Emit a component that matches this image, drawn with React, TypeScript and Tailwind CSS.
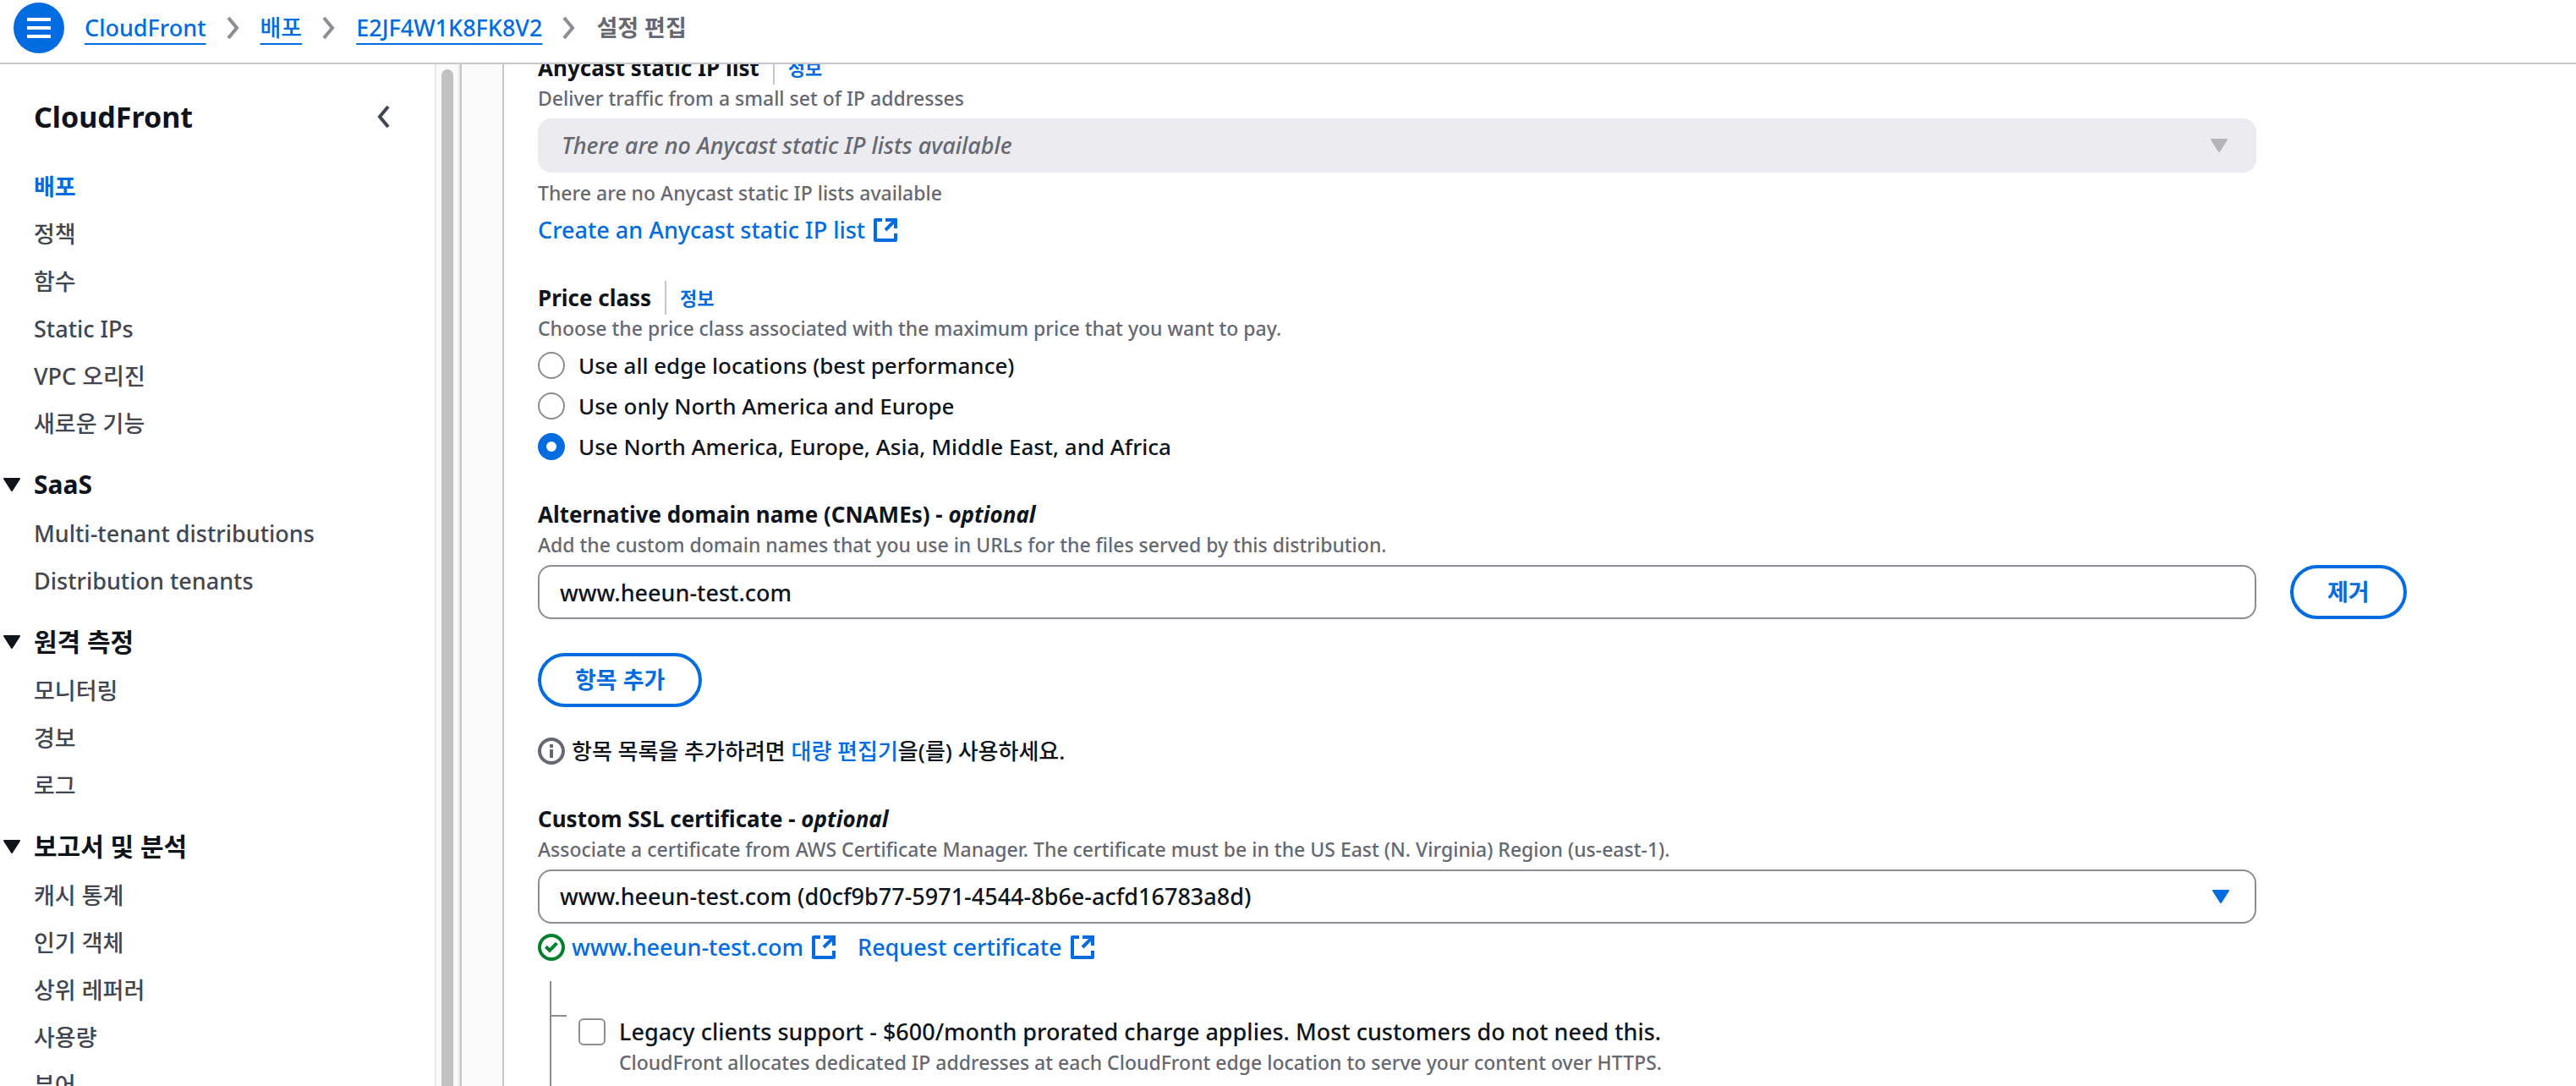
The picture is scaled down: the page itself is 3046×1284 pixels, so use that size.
import React, { useState } from 'react';

interface NavSection {
  title: string;
  items: string[];
}

const mainItems = ['배포', '정책', '함수', 'Static IPs', 'VPC 오리진', '새로운 기능'];

const sections: NavSection[] = [
  { title: 'SaaS', items: ['Multi-tenant distributions', 'Distribution tenants'] },
  { title: '원격 측정', items: ['모니터링', '경보', '로그'] },
  { title: '보고서 및 분석', items: ['캐시 통계', '인기 객체', '상위 레퍼러', '사용량', '뷰어'] },
];

const priceClasses = [
  { value: 'all', label: 'Use all edge locations (best performance)' },
  { value: '100', label: 'Use only North America and Europe' },
  { value: '200', label: 'Use North America, Europe, Asia, Middle East, and Africa' },
];

function Chevron({ className, left = false }: { className?: string; left?: boolean }) {
  return (
    <svg viewBox="0 0 16 28" className={className} fill="none" stroke="currentColor" strokeWidth="4">
      <path d={left ? 'M14 2L4 14L14 26' : 'M2 2L12 14L2 26'} />
    </svg>
  );
}

function Caret({ className }: { className?: string }) {
  return (
    <svg viewBox="0 0 20 16" className={className} fill="currentColor" stroke="currentColor" strokeWidth="2" strokeLinejoin="round">
      <path d="M1 1H19L10 15Z" />
    </svg>
  );
}

function ExternalIcon() {
  return (
    <svg viewBox="0 0 16 16" className="size-8 shrink-0" fill="none" stroke="currentColor" strokeWidth="2">
      <path d="M6 2H2V14H14V10" strokeLinejoin="round" />
      <path d="M8 2H14V7M14 2L8 8" />
    </svg>
  );
}

function InfoLink() {
  return (
    <a href="#info" className="ml-4 border-l-2 border-[#c6c6cd] pl-4 text-[22px] font-bold text-[#006ce0]">
      정보
    </a>
  );
}

function Hint({ children }: { children: React.ReactNode }) {
  return <p className="text-[23px] leading-8 text-[#656871]">{children}</p>;
}

function Sidebar() {
  return (
    <aside className="flex w-[546px] shrink-0 border-r-2 border-[#c6c6cd]">
      <nav className="flex-1 pt-10">
        <div className="flex h-11 items-center justify-between pr-[53px] pl-10">
          <h2 className="text-[34px] font-bold text-[#0f141a]">CloudFront</h2>
          <button type="button" aria-label="닫기">
            <Chevron left className="h-7 w-4 text-[#424650]" />
          </button>
        </div>
        <ul className="mt-[41px] flex flex-col gap-4 pl-10">
          {mainItems.map((item, i) => (
            <li key={item}>
              <a href="#nav" className={i === 0 ? 'font-bold text-[#006ce0]' : 'text-[#424650]'}>
                {item}
              </a>
            </li>
          ))}
        </ul>
        {sections.map((section) => (
          <section key={section.title} className="mt-[30px]">
            <button type="button" className="flex h-11 items-center gap-4 pl-1 text-[30px] font-bold">
              <Caret className="h-4 w-5" />
              {section.title}
            </button>
            <ul className="mt-4 flex flex-col gap-4 pl-10">
              {section.items.map((item) => (
                <li key={item}>
                  <a href="#nav" className="text-[#424650]">{item}</a>
                </li>
              ))}
            </ul>
          </section>
        ))}
      </nav>
      {/* scroll track */}
      <div className="w-[30px] border-x-2 border-[#e8e8e8] bg-[#fafafa] px-[6px] pt-[6px]">
        <div className="h-full rounded-t-full bg-[#c1c1c1]" />
      </div>
    </aside>
  );
}

export default function App() {
  const [priceClass, setPriceClass] = useState('200');
  const [domain, setDomain] = useState('www.heeun-test.com');
  const [legacy, setLegacy] = useState(false);

  return (
    <div className="flex h-screen flex-col overflow-hidden bg-white font-['Noto_Sans','Noto_Sans_CJK_KR',sans-serif] text-[27px] leading-10 font-medium text-[#0f141a]">
      <header className="flex h-[76px] shrink-0 items-start border-b-2 border-[#c6c6cd] px-4 pt-[3px]">
        <button type="button" aria-label="메뉴" className="flex size-[60px] flex-col items-center justify-center gap-[6px] rounded-full bg-[#006ce0]">
          <span className="h-1 w-7 bg-white" />
          <span className="h-1 w-7 bg-white" />
          <span className="h-1 w-7 bg-white" />
        </button>
        <nav className="ml-6 flex h-[60px] items-center gap-6">
          {['CloudFront', '배포', 'E2JF4W1K8FK8V2'].map((crumb) => (
            <React.Fragment key={crumb}>
              <a href="#crumb" className="text-[#006ce0] underline decoration-2 underline-offset-8">
                {crumb}
              </a>
              <Chevron className="h-7 w-4 text-[#8c8c94]" />
            </React.Fragment>
          ))}
          <span className="font-bold text-[#656871]">설정 편집</span>
        </nav>
      </header>

      <div className="flex min-h-0 flex-1 overflow-hidden">
        <Sidebar />
        <main className="flex-1 bg-[#fbfbfb] pl-12">
          <div className="h-full overflow-hidden border-l-2 border-[#c6c6cd] bg-white">
            <form className="-mt-4 flex flex-col gap-10 px-10">
              <div className="grid grid-cols-[minmax(0,1fr)_298px] gap-x-10">
                <div>
                  <div className="flex">
                    <label htmlFor="anycast" className="text-[26px] font-bold">Anycast static IP list</label>
                    <InfoLink />
                  </div>
                  <Hint>Deliver traffic from a small set of IP addresses</Hint>
                  <div className="relative my-2">
                    <select id="anycast" disabled className="h-16 w-full appearance-none rounded-2xl bg-[#ebebf0] px-7 text-[#656871] italic opacity-100">
                      <option>There are no Anycast static IP lists available</option>
                    </select>
                    <Caret className="pointer-events-none absolute top-6 right-[34px] h-4 w-5 text-[#b4b4bb]" />
                  </div>
                  <Hint>There are no Anycast static IP lists available</Hint>
                  <a href="#create" className="mt-2 flex items-center gap-2 text-[#006ce0]">
                    Create an Anycast static IP list
                    <ExternalIcon />
                  </a>
                </div>
              </div>

              <fieldset>
                <div className="flex">
                  <legend className="text-[26px] font-bold">Price class</legend>
                  <InfoLink />
                </div>
                <Hint>Choose the price class associated with the maximum price that you want to pay.</Hint>
                <div className="mt-2 flex flex-col items-start gap-2 text-[26px]">
                  {priceClasses.map((option) => (
                    <label key={option.value} className="flex items-center gap-4">
                      <input
                        type="radio"
                        name="price-class"
                        checked={priceClass === option.value}
                        onChange={() => setPriceClass(option.value)}
                        className="size-8 appearance-none rounded-full border-2 border-[#8c8c94] bg-white checked:border-10 checked:border-[#006ce0]"
                      />
                      {option.label}
                    </label>
                  ))}
                </div>
              </fieldset>

              <div>
                <label htmlFor="cname" className="block text-[26px] font-bold">
                  Alternative domain name (CNAMEs) - <i>optional</i>
                </label>
                <Hint>Add the custom domain names that you use in URLs for the files served by this distribution.</Hint>
                <div className="mt-2 grid grid-cols-[minmax(0,1fr)_298px] gap-x-10">
                  <input
                    id="cname"
                    type="text"
                    value={domain}
                    onChange={(e) => setDomain(e.target.value)}
                    className="h-16 w-full rounded-2xl border-2 border-[#8c8c94] px-6"
                  />
                  <div>
                    <button type="button" className="h-16 rounded-full border-4 border-[#006ce0] px-10 font-bold text-[#006ce0]">
                      제거
                    </button>
                  </div>
                </div>
                <button type="button" className="mt-10 h-16 rounded-full border-4 border-[#006ce0] px-10 font-bold text-[#006ce0]">
                  항목 추가
                </button>
                <div className="mt-8 flex items-center gap-2">
                  <svg viewBox="0 0 16 16" className="size-8" fill="none" stroke="#656871" strokeWidth="2">
                    <circle cx="8" cy="8" r="7" />
                    <path d="M8 12V7M8 6V4" />
                  </svg>
                  <p className="text-[26px]">
                    항목 목록을 추가하려면 <a href="#bulk" className="text-[#006ce0]">대량 편집기</a>을(를) 사용하세요.
                  </p>
                </div>
              </div>

              <div className="grid grid-cols-[minmax(0,1fr)_298px] gap-x-10">
                <div>
                  <label htmlFor="certificate" className="block text-[26px] font-bold">
                    Custom SSL certificate - <i>optional</i>
                  </label>
                  <Hint>Associate a certificate from AWS Certificate Manager. The certificate must be in the US East (N. Virginia) Region (us-east-1).</Hint>
                  <div className="relative my-2">
                    <select id="certificate" className="h-16 w-full appearance-none rounded-2xl border-2 border-[#8c8c94] bg-white px-6">
                      <option>www.heeun-test.com (d0cf9b77-5971-4544-8b6e-acfd16783a8d)</option>
                    </select>
                    <Caret className="pointer-events-none absolute top-6 right-8 h-4 w-5 text-[#006ce0]" />
                  </div>
                  <div className="flex items-center gap-6 text-[#006ce0]">
                    <div className="flex items-center gap-2">
                      <svg viewBox="0 0 16 16" className="size-8" fill="none" stroke="#00802f" strokeWidth="2">
                        <circle cx="8" cy="8" r="7" />
                        <path d="M4.7 7.6L7 9.8L11.2 5.6" />
                      </svg>
                      <a href="#cert" className="flex items-center gap-2">
                        www.heeun-test.com
                        <ExternalIcon />
                      </a>
                    </div>
                    <a href="#request" className="flex items-center gap-2">
                      Request certificate
                      <ExternalIcon />
                    </a>
                  </div>
                  <div className="mt-5 ml-[14px] flex border-l-2 border-[#8c8c94]">
                    <div className="mt-10 h-[2px] w-[18px] bg-[#8c8c94]" />
                    <div className="mt-10 ml-[14px] flex gap-4 pb-10">
                      <input
                        id="legacy"
                        type="checkbox"
                        checked={legacy}
                        onChange={() => setLegacy(!legacy)}
                        className="mt-1 size-8 appearance-none rounded-md border-2 border-[#8c8c94] bg-white checked:bg-[#006ce0]"
                      />
                      <div>
                        <label htmlFor="legacy" className="block">
                          Legacy clients support - $600/month prorated charge applies. Most customers do not need this.
                        </label>
                        <Hint>CloudFront allocates dedicated IP addresses at each CloudFront edge location to serve your content over HTTPS.</Hint>
                      </div>
                    </div>
                  </div>
                </div>
              </div>
            </form>
          </div>
        </main>
      </div>
    </div>
  );
}
